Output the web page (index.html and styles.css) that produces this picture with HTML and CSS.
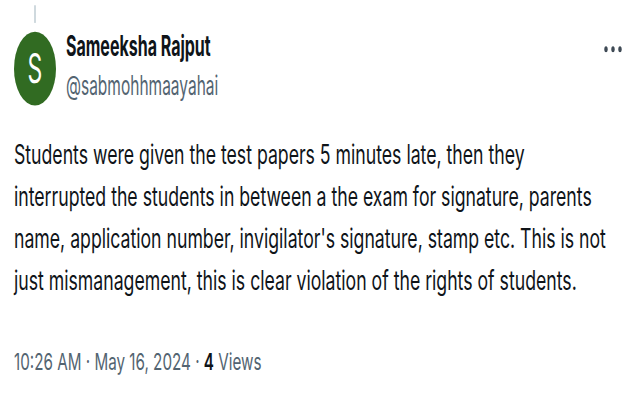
FILE: index.html
```html
<!DOCTYPE html>
<html>
<head>
<meta charset="utf-8">
<link rel="stylesheet" href="styles.css">
</head>
<body>
<div class="stage">
  <div class="tweet">
    <div class="thread"></div>
    <div class="header">
      <div class="avatar">S</div>
      <div class="who">
        <div class="name">Sameeksha Rajput</div>
        <div class="handle">@sabmohhmaayahai</div>
      </div>
      <svg class="more" width="18" height="4" viewBox="0 0 18 4">
        <circle cx="2" cy="2" r="1.7"/>
        <circle cx="9" cy="2" r="1.7"/>
        <circle cx="16" cy="2" r="1.7"/>
      </svg>
    </div>
    <p class="text">Students were given the test papers 5 minutes late, then they<br>interrupted the students in between a the exam for signature, parents<br>name, application number, invigilator's signature, stamp etc. This is not<br>just mismanagement, this is clear violation of the rights of students.</p>
    <div class="meta">10:26 AM · May 16, 2024 · <span class="count">4</span> Views</div>
  </div>
</div>
</body>
</html>
```
FILE: styles.css
```css
html, body {
  margin: 0;
  padding: 0;
  background: #ffffff;
  height: 400px;
  overflow: hidden;
}
.stage {
  width: 638px;
  height: 228px;
  transform: scale(1, 1.76);
  transform-origin: 0 0;
  font-family: Inter, "Noto Sans", sans-serif;
  color: #0f1419;
}
.tweet {
  padding: 3px 16px 0 14px;
}
.thread {
  width: 2px;
  height: 10px;
  margin-left: 20px;
  background: #cfd9de;
}
.header {
  display: flex;
  align-items: flex-start;
  margin-top: 4.5px;
  height: 42px;
}
.avatar {
  width: 42px;
  height: 42px;
  border-radius: 50%;
  background: #316b22;
  color: #ffffff;
  font-size: 23px;
  line-height: 42px;
  text-align: center;
  flex: none;
}
.who {
  margin-left: 10px;
  margin-top: -2px;
}
.name {
  font-weight: 700;
  font-size: 16px;
  line-height: 20px;
}
.handle {
  margin-top: 3px;
  font-size: 15.5px;
  line-height: 20px;
  color: #536471;
}
.more {
  margin-left: auto;
  margin-top: 8px;
  fill: #3f4a55;
}
.text {
  width: fit-content;
  margin: 16.7px 0 0 0;
  font-size: 15.2px;
  line-height: 24px;
  white-space: nowrap;
  transform: scaleX(1.163);
  transform-origin: 0 0;
}
.meta {
  width: fit-content;
  margin-top: 23px;
  font-size: 13.3px;
  line-height: 20px;
  color: #536471;
  transform: scaleX(1.145);
  transform-origin: 0 0;
}
.count {
  color: #0f1419;
  font-weight: 600;
}
```
